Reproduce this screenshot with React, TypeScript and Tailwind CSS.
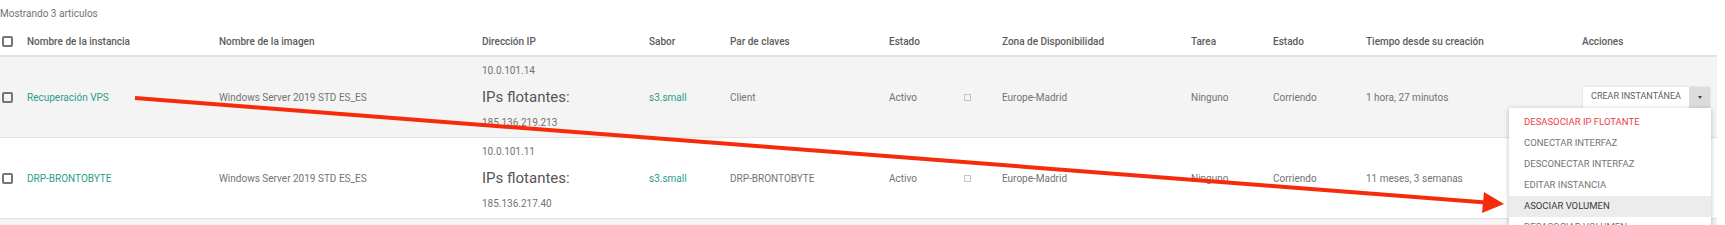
import React from 'react';

type Row = {
  name: string;
  image: string;
  ip: string;
  floating: string;
  flavor: string;
  keypair: string;
  time: string;
  striped: boolean;
};

const rows: Row[] = [
  {
    name: 'Recuperación VPS',
    image: 'Windows Server 2019 STD ES_ES',
    ip: '10.0.101.14',
    floating: '185.136.219.213',
    flavor: 's3.small',
    keypair: 'Client',
    time: '1 hora, 27 minutos',
    striped: true,
  },
  {
    name: 'DRP-BRONTOBYTE',
    image: 'Windows Server 2019 STD ES_ES',
    ip: '10.0.101.11',
    floating: '185.136.217.40',
    flavor: 's3.small',
    keypair: 'DRP-BRONTOBYTE',
    time: '11 meses, 3 semanas',
    striped: false,
  },
];

const menuItems = [
  'Desasociar IP flotante',
  'Conectar interfaz',
  'Desconectar interfaz',
  'Editar instancia',
  'Asociar volumen',
  'Desasociar volumen',
  'Actualizar metadatos',
];

const cols =
  'grid grid-cols-[27px_192px_263px_167px_81px_159px_75px_38px_189px_82px_93px_216px_135px]';

const Checkbox = () => (
  <div className="w-[11px] h-[11px] border-2 border-[#757575] rounded-[2px]" />
);

const ActionButton = ({ open }: { open: boolean }) => (
  <div className="relative flex h-[21px] w-[127px] ml-px shadow-[0_0_2px_rgba(0,0,0,0.15)]">
    <div className="flex-1 bg-white flex items-center justify-center text-[9px] text-[#5f5f5f]">
      CREAR INSTANTÁNEA
    </div>
    <div className="w-[21px] bg-[#dcdcdc] flex items-center justify-center">
      <div className="w-0 h-0 border-l-[2.5px] border-r-[2.5px] border-t-[3px] border-l-transparent border-r-transparent border-t-[#444]" />
    </div>
    {open && (
      <div className="absolute top-full right-[-1px] w-[202px] bg-white shadow-[0_1px_5px_rgba(0,0,0,0.25)] pt-[4px] z-10">
        {menuItems.map((item, i) => (
          <div
            key={item}
            className={`h-[21px] px-[15px] flex items-center text-[9.5px] uppercase ${
              i === 0
                ? 'text-[#ec3b4b]'
                : i === 4
                ? 'bg-[#ececec] text-[#3a3a3a]'
                : 'text-[#757575]'
            }`}
          >
            {item}
          </div>
        ))}
      </div>
    )}
  </div>
);

export default function App() {
  return (
    <div className="relative w-full h-[225px] overflow-hidden bg-white font-['Roboto',sans-serif] text-[10px] text-[#737373]">
      <div className="h-[27px] flex items-center">Mostrando 3 articulos</div>

      <div className="w-[1717px]">
        <div className={`${cols} h-[30px] items-center border-b-2 border-[#e2e2e2] font-medium text-[#5c5c5c]`}>
          <div className="pl-[2px]">
            <Checkbox />
          </div>
          <div>Nombre de la instancia</div>
          <div>Nombre de la imagen</div>
          <div>Dirección IP</div>
          <div>Sabor</div>
          <div>Par de claves</div>
          <div>Estado</div>
          <div />
          <div>Zona de Disponibilidad</div>
          <div>Tarea</div>
          <div>Estado</div>
          <div>Tiempo desde su creación</div>
          <div>Acciones</div>
        </div>

        {rows.map((r, idx) => (
          <div
            key={r.name}
            className={`${cols} h-[81px] items-center border-b border-[#e2e2e2] ${
              r.striped ? 'bg-[#f4f4f4]' : 'bg-white'
            }`}
          >
            <div className="pl-[2px]">
              <Checkbox />
            </div>
            <div className="text-[#2a9d8c]">{r.name}</div>
            <div>{r.image}</div>
            <div className="flex flex-col">
              <span className="leading-[26px]">{r.ip}</span>
              <span className="leading-[26px] text-[15px] text-[#555]">IPs flotantes:</span>
              <span className="leading-[26px]">{r.floating}</span>
            </div>
            <div className="text-[#2a9d8c]">{r.flavor}</div>
            <div>{r.keypair}</div>
            <div>Activo</div>
            <div>
              <div className="w-[7px] h-[7px] border border-[#c4c4c4]" />
            </div>
            <div>Europe-Madrid</div>
            <div>Ninguno</div>
            <div>Corriendo</div>
            <div>{r.time}</div>
            <div>
              <ActionButton open={idx === 0} />
            </div>
          </div>
        ))}

        <div className="h-[40px] bg-[#f4f4f4]" />
      </div>

      <svg
        className="absolute inset-0 pointer-events-none z-20"
        width="1725"
        height="225"
        viewBox="0 0 1725 225"
      >
        <line x1="135" y1="98" x2="1486" y2="202.5" stroke="#f62b0c" strokeWidth="4" />
        <polygon points="1504,204 1484,192 1482,213" fill="#f62b0c" />
      </svg>
    </div>
  );
}
